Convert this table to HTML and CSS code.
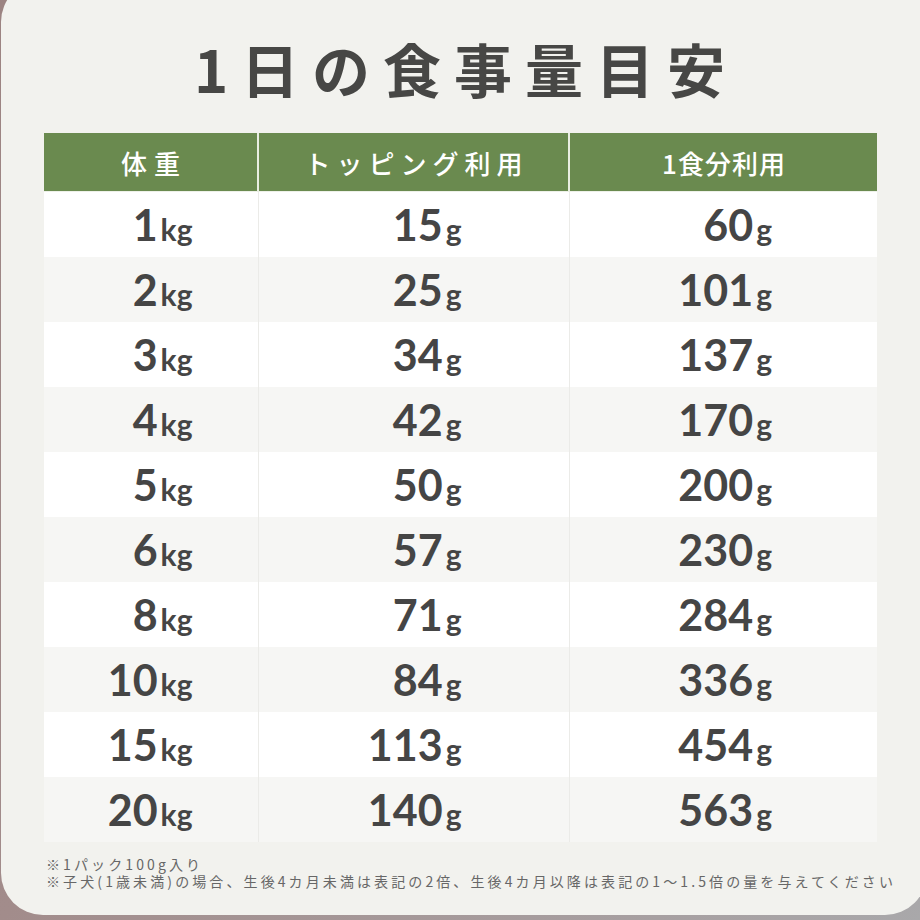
FILE: index.html
```html
<!DOCTYPE html>
<html lang="ja">
<head>
<meta charset="utf-8">
<title>1日の食事量目安</title>
<link rel="stylesheet" href="styles.css">
</head>
<body>
<div class="card">
  <h1 class="title">1日の食事量目安</h1>
  <table class="feed">
    <colgroup><col class="c1"><col class="c2"><col class="c3"></colgroup>
    <thead>
      <tr>
        <th class="h1">体重</th>
        <th class="h2">トッピング利用</th>
        <th class="h3">1食分利用</th>
      </tr>
    </thead>
    <tbody>
      <tr><td class="w">1<span class="u">kg</span></td><td class="t">15<span class="u">g</span></td><td class="m">60<span class="u">g</span></td></tr>
      <tr><td class="w">2<span class="u">kg</span></td><td class="t">25<span class="u">g</span></td><td class="m">101<span class="u">g</span></td></tr>
      <tr><td class="w">3<span class="u">kg</span></td><td class="t">34<span class="u">g</span></td><td class="m">137<span class="u">g</span></td></tr>
      <tr><td class="w">4<span class="u">kg</span></td><td class="t">42<span class="u">g</span></td><td class="m">170<span class="u">g</span></td></tr>
      <tr><td class="w">5<span class="u">kg</span></td><td class="t">50<span class="u">g</span></td><td class="m">200<span class="u">g</span></td></tr>
      <tr><td class="w">6<span class="u">kg</span></td><td class="t">57<span class="u">g</span></td><td class="m">230<span class="u">g</span></td></tr>
      <tr><td class="w">8<span class="u">kg</span></td><td class="t">71<span class="u">g</span></td><td class="m">284<span class="u">g</span></td></tr>
      <tr><td class="w">10<span class="u">kg</span></td><td class="t">84<span class="u">g</span></td><td class="m">336<span class="u">g</span></td></tr>
      <tr><td class="w">15<span class="u">kg</span></td><td class="t">113<span class="u">g</span></td><td class="m">454<span class="u">g</span></td></tr>
      <tr><td class="w">20<span class="u">kg</span></td><td class="t">140<span class="u">g</span></td><td class="m">563<span class="u">g</span></td></tr>
    </tbody>
  </table>
  <div class="notes">
    <p>※1パック100g入り</p>
    <p>※子犬(1歳未満)の場合、生後4カ月未満は表記の2倍、生後4カ月以降は表記の1〜1.5倍の量を与えてください</p>
  </div>
</div>
</body>
</html>
```

FILE: styles.css
```css
html, body {
  margin: 0;
  padding: 0;
  overflow: hidden;
  height: 920px;
}
body {
  background: linear-gradient(135deg, #9c8482 0%, #a28c8b 50%, #a9a8aa 100%);
  font-family: "Noto Sans CJK JP", "Noto Sans", sans-serif;
}
.card {
  box-sizing: border-box;
  width: 926px;
  height: 935px;
  margin: -20px 0 0 1px;
  padding-top: 53px;
  background: #f2f2ee;
  border-radius: 42px;
}
.title {
  margin: 0;
  height: 70px;
  line-height: 70px;
  text-align: center;
  font-size: 58px;
  font-weight: 700;
  letter-spacing: 13px;
  padding-left: 4px;
  color: #474745;
}
.feed {
  margin: 30px 0 0 43px;
  width: 833px;
  border-collapse: collapse;
  table-layout: fixed;
}
.c1 { width: 214px; }
.c2 { width: 311px; }
.c3 { width: 308px; }
.feed th {
  height: 58px;
  padding: 0;
  background: #6a8a4f;
  color: #ffffff;
  font-size: 26px;
  font-weight: 500;
  text-align: center;
  border-left: 2px solid #e9eee2;
  border-bottom: 1px solid #eef1e9;
}
.feed th:first-child { border-left: none; }
.h1 { letter-spacing: 7px; text-indent: 7px; }
.h2 { letter-spacing: 6px; text-indent: 6px; }
.h3 { letter-spacing: 1px; text-indent: 1px; }
.feed td {
  height: 65px;
  padding: 0;
  text-align: right;
  font-family: Lato, "Noto Sans", sans-serif;
  font-weight: 700;
  font-size: 43px;
  line-height: 1;
  color: #454545;
  border-left: 1px solid #ebebe8;
  vertical-align: middle;
}
.feed td:first-child { border-left: none; }
.feed tbody tr:nth-child(odd) td { background: #ffffff; }
.feed tbody tr:nth-child(even) td { background: #f6f6f4; }
.w { padding-right: 65px !important; }
.t { padding-right: 107px !important; }
.m { padding-right: 105px !important; }
.u {
  font-size: 30px;
  margin-left: 3px;
}
.notes {
  margin: 14px 0 0 45px;
  color: #676767;
  font-size: 14px;
  letter-spacing: 3.1px;
  line-height: 17px;
}
.notes p { margin: 0; white-space: nowrap; }
```
